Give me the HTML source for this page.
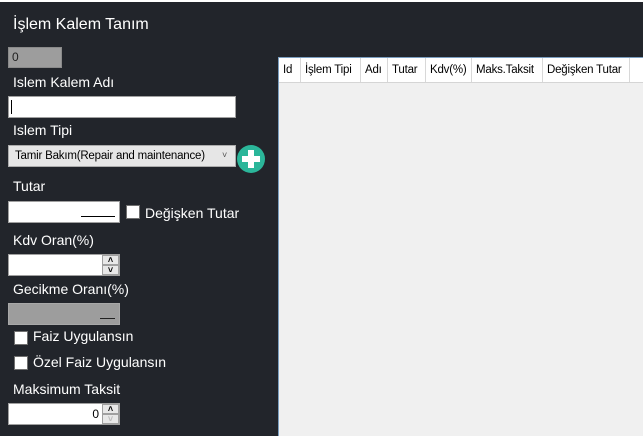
<!DOCTYPE html>
<html><head><meta charset="utf-8"><style>
*{margin:0;padding:0;box-sizing:border-box}
body{width:643px;height:436px;overflow:hidden;background:#22252b;font-family:"Liberation Sans",sans-serif;color:#fff;position:relative}
.a{position:absolute}
.lbl{font-size:14px;color:#fff;white-space:nowrap}
.box{background:#fff;border:1px solid #a0a0a0}
.cb{width:14px;height:14px;background:#fff;border:1px solid #707070}
.spin{background:#e8e8e8;border:1px solid #a0a0a0;font-size:9px;color:#000;text-align:center;line-height:8px;font-weight:bold}
.hd{position:absolute;top:0;height:24px;border-right:1px solid #d8d8d8;font-size:11.5px;color:#000;line-height:24px;padding-left:4px;white-space:nowrap;letter-spacing:-0.2px}
</style></head><body>
<div class="a" style="left:0;top:0;width:643px;height:2px;background:#fff"></div>
<div class="a lbl" style="left:13px;top:16px;font-size:16px">İşlem Kalem Tanım</div>
<div class="a" style="left:8px;top:47px;width:54px;height:21px;background:#9d9d9d;border:1px solid #8a8a8a;color:#222;font-size:12px;padding-left:3px;line-height:19px">0</div>
<div class="a lbl" style="left:13px;top:74px">Islem Kalem Adı</div>
<div class="a box" style="left:8px;top:96px;width:228px;height:22px"><div class="a" style="left:2px;top:3px;width:1px;height:14px;background:#000"></div></div>
<div class="a lbl" style="left:13px;top:122px">Islem Tipi</div>
<div class="a" style="left:8px;top:145px;width:228px;height:22px;background:#e6e6e6;border:1px solid #acacac;color:#000;font-size:11.5px;line-height:20px;padding-left:6px;letter-spacing:-0.2px">Tamir Bakım(Repair and maintenance)<span class="a" style="right:8px;top:-1px;font-size:9px;color:#555">˅</span></div>
<div class="a" style="left:237px;top:145px;width:28px;height:28px;border-radius:50%;background:#2bb69a"></div>
<div class="a" style="left:248px;top:150px;width:6px;height:18px;background:#fff"></div>
<div class="a" style="left:242px;top:156px;width:18px;height:6px;background:#fff"></div>
<div class="a lbl" style="left:13px;top:178px">Tutar</div>
<div class="a box" style="left:8px;top:201px;width:112px;height:22px"><div class="a" style="left:72px;top:14px;width:34px;height:1px;background:#000"></div></div>
<div class="a cb" style="left:126px;top:205px"></div>
<div class="a lbl" style="left:145px;top:205px">Değişken Tutar</div>
<div class="a lbl" style="left:13px;top:232px">Kdv Oran(%)</div>
<div class="a box" style="left:8px;top:254px;width:112px;height:22px"></div>
<div class="a spin" style="left:102px;top:255px;width:17px;height:10px">˄</div>
<div class="a spin" style="left:102px;top:265px;width:17px;height:10px">˅</div>
<div class="a lbl" style="left:13px;top:281px">Gecikme Oranı(%)</div>
<div class="a" style="left:8px;top:303px;width:112px;height:22px;background:#9d9d9d;border:1px solid #a8a8a8"><div class="a" style="left:91px;top:14px;width:15px;height:1px;background:#222"></div></div>
<div class="a cb" style="left:14px;top:331px"></div>
<div class="a lbl" style="left:33px;top:328px">Faiz Uygulansın</div>
<div class="a cb" style="left:14px;top:356px"></div>
<div class="a lbl" style="left:33px;top:354px">Özel Faiz Uygulansın</div>
<div class="a lbl" style="left:13px;top:381px">Maksimum Taksit</div>
<div class="a box" style="left:8px;top:403px;width:112px;height:22px;color:#000;font-size:12px;text-align:right;padding-right:20px;line-height:20px">0</div>
<div class="a spin" style="left:102px;top:404px;width:17px;height:10px">˄</div>
<div class="a spin" style="left:102px;top:414px;width:17px;height:10px;color:#bbb">˅</div>
<div class="a" style="left:278px;top:57px;width:365px;height:379px;background:#f0f0f0;border-left:1px solid #7a9ec0;border-top:1px solid #7a9ec0">
 <div class="a" style="left:0;top:0;width:365px;height:25px;background:#fff;border-bottom:1px solid #d5d5d5"></div>
 <div class="hd" style="left:0;width:22px">Id</div>
 <div class="hd" style="left:22px;width:60px">İşlem Tipi</div>
 <div class="hd" style="left:82px;width:27px">Adı</div>
 <div class="hd" style="left:109px;width:38px">Tutar</div>
 <div class="hd" style="left:147px;width:46px">Kdv(%)</div>
 <div class="hd" style="left:193px;width:71px">Maks.Taksit</div>
 <div class="hd" style="left:264px;width:87px">Değişken Tutar</div>
</div>
</body></html>
